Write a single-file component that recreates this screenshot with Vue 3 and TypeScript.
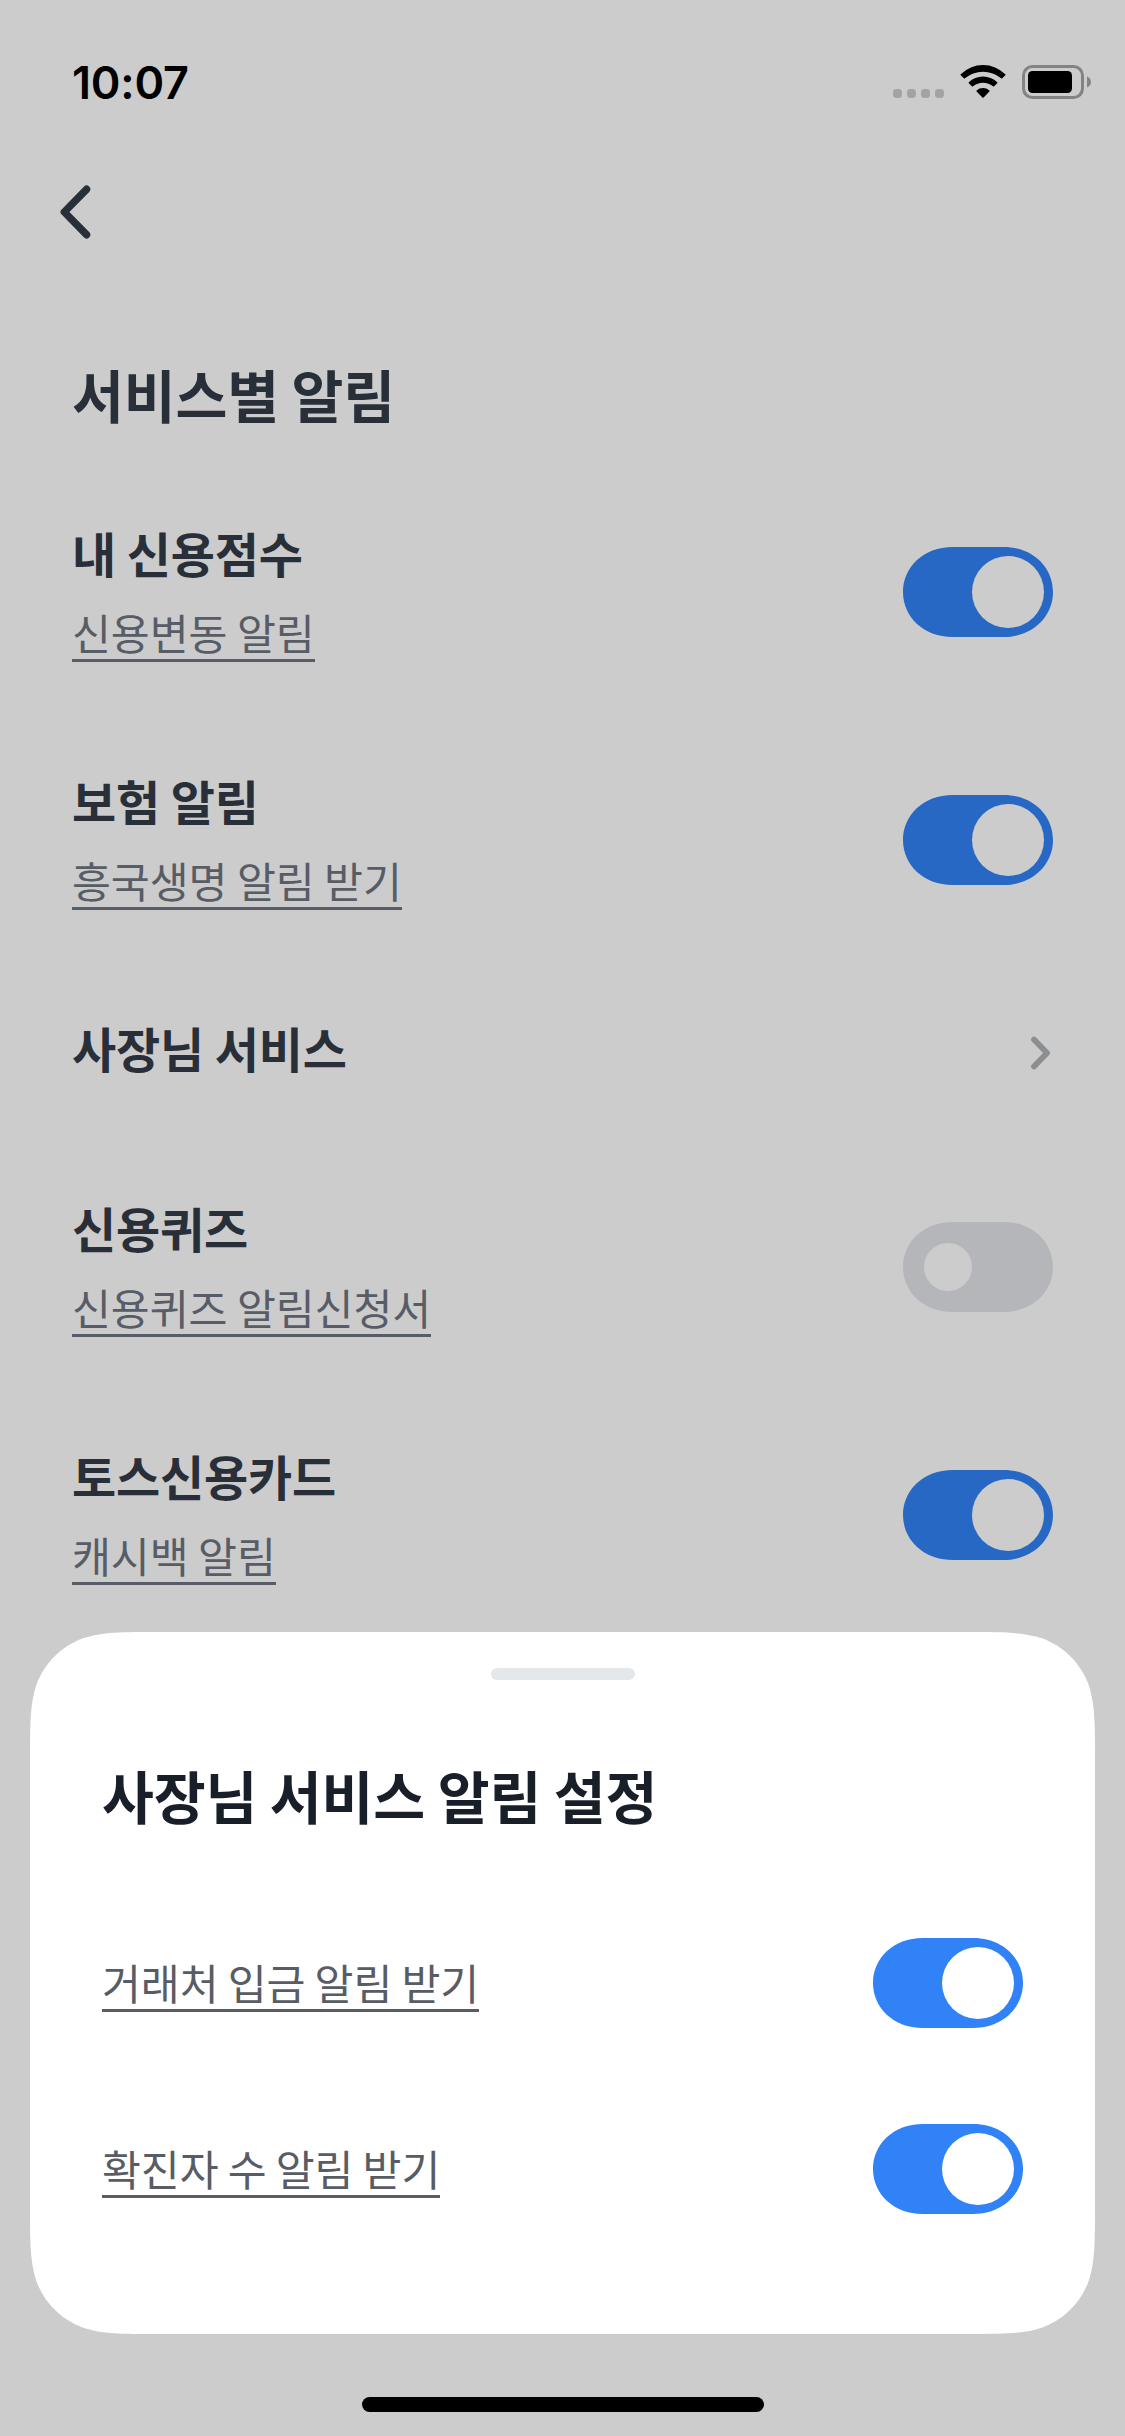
<script setup lang="ts">
interface ServiceRow {
  title: string
  detail?: string
  kind: 'switch' | 'link'
  on?: boolean
}

const services: ServiceRow[] = [
  { title: '내 신용점수', detail: '신용변동 알림', kind: 'switch', on: true },
  { title: '보험 알림', detail: '흥국생명 알림 받기', kind: 'switch', on: true },
  { title: '사장님 서비스', kind: 'link' },
  { title: '신용퀴즈', detail: '신용퀴즈 알림신청서', kind: 'switch', on: false },
  { title: '토스신용카드', detail: '캐시백 알림', kind: 'switch', on: true },
]

const sheetOptions: { label: string; on: boolean }[] = [
  { label: '거래처 입금 알림 받기', on: true },
  { label: '확진자 수 알림 받기', on: true },
]

// Continuous-curvature rounded rectangle used by the bottom sheet.
function smoothRect(w: number, h: number, r: number): string {
  const a = 1.52866 * r
  const b = 1.08849 * r
  const c = 0.86841 * r
  const d = 0.63149 * r
  const e = 0.07491 * r
  const f = 0.37282 * r
  const g = 0.16906 * r
  return [
    `M${a} 0 L${w - a} 0`,
    `C${w - b} 0 ${w - c} 0 ${w - d} ${e} C${w - f} ${g} ${w - g} ${f} ${w - e} ${d} C${w} ${c} ${w} ${b} ${w} ${a}`,
    `L${w} ${h - a}`,
    `C${w} ${h - b} ${w} ${h - c} ${w - e} ${h - d} C${w - g} ${h - f} ${w - f} ${h - g} ${w - d} ${h - e} C${w - c} ${h} ${w - b} ${h} ${w - a} ${h}`,
    `L${a} ${h}`,
    `C${b} ${h} ${c} ${h} ${d} ${h - e} C${f} ${h - g} ${g} ${h - f} ${e} ${h - d} C0 ${h - c} 0 ${h - b} 0 ${h - a}`,
    `L0 ${a}`,
    `C0 ${b} 0 ${c} ${e} ${d} C${g} ${f} ${f} ${g} ${d} ${e} C${c} 0 ${b} 0 ${a} 0 Z`,
  ].join(' ')
}

const sheetClip = `path('${smoothRect(1065, 702, 84)}')`
</script>

<template>
  <div class="screen">
    <header class="status">
      <span class="time">10:07</span>
      <div class="indicators">
        <svg class="dots" width="51" height="9" viewBox="0 0 51 9">
          <rect v-for="i in 4" :key="i" :x="(i - 1) * 14" y="0" width="9" height="9" rx="3.4" />
        </svg>
        <svg class="wifi" width="46" height="34" viewBox="0 0 46 34">
          <path d="M.7 9.3A31.4 31.4 0 0 1 45.3 9.3Q45.8 9.8 45.3 10.3L42.2 13.3Q41.7 13.8 41.1 13.3A28.4 28.4 0 0 0 4.9 13.3Q4.3 13.8 3.8 13.3L.7 10.3Q.2 9.8 .7 9.3Z" />
          <path d="M8.8 17.3A20 20 0 0 1 37.2 17.3Q37.7 17.8 37.2 18.3L34.1 21.3Q33.6 21.8 33 21.3A16 16 0 0 0 13 21.3Q12.4 21.8 11.9 21.3L8.8 18.3Q8.3 17.8 8.8 17.3Z" />
          <path d="M16.6 25.6A9.5 9.5 0 0 1 29.4 25.6Q29.9 26.1 29.4 26.6L23.6 32.6Q23 33.1 22.4 32.6L16.6 26.6Q16.1 26.1 16.6 25.6Z" />
        </svg>
        <svg class="battery" width="70" height="34" viewBox="0 0 70 34">
          <rect x="1.5" y="1.5" width="59" height="31" rx="9" fill="none" stroke="#828384" stroke-width="3" />
          <rect x="6" y="6" width="44" height="22" rx="4.5" />
          <path d="M65 11.5C70.300 13.500 70.300 20.500 65 22.500Z" fill="#828384" />
        </svg>
      </div>
    </header>

    <nav class="nav">
      <svg width="32" height="54" viewBox="0 0 32 54">
        <path d="M26.500 4.300L4.300 27L26.500 49.700" />
      </svg>
    </nav>

    <h1 class="heading">서비스별 알림</h1>

    <ul class="services">
      <li v-for="row in services" :key="row.title" class="row" :class="{ link: row.kind === 'link' }">
        <div class="copy">
          <strong>{{ row.title }}</strong>
          <span v-if="row.detail" class="detail">{{ row.detail }}</span>
        </div>
        <div v-if="row.kind === 'switch'" class="toggle" :class="{ on: row.on }"><i /></div>
        <svg v-else class="chevron" width="22" height="36" viewBox="0 0 22 36">
          <path d="M4 4.500L17 18L4 31.500" />
        </svg>
      </li>
    </ul>

    <div class="dim" />

    <section class="sheet" :style="{ clipPath: sheetClip }">
      <div class="handle" />
      <h2>사장님 서비스 알림 설정</h2>
      <div v-for="option in sheetOptions" :key="option.label" class="option">
        <span class="detail">{{ option.label }}</span>
        <div class="toggle" :class="{ on: option.on }"><i /></div>
      </div>
    </section>

    <div class="home" />
  </div>
</template>

<style>
body {
  margin: 0;
  background: #fff;
}
</style>

<style scoped>
.screen {
  position: relative;
  width: 1125px;
  height: 2436px;
  overflow: hidden;
  background: #fff;
  font-family: 'Noto Sans CJK KR', sans-serif;
}
.status {
  position: relative;
  z-index: 2;
  display: flex;
  justify-content: space-between;
  box-sizing: border-box;
  height: 132px;
  padding: 55px 33px 0 72px;
}
.time {
  padding-top: 1px;
  font: 600 45px/54px Inter, sans-serif;
  letter-spacing: -0.2px;
  color: #000;
}
.indicators {
  display: flex;
  align-items: flex-start;
  padding-top: 10px;
}
.dots {
  margin: 24px 16px 0 0;
  fill: #a2a3a3;
}
.wifi {
  margin-right: 16px;
}
.nav {
  display: flex;
  align-items: center;
  height: 160px;
  padding-left: 60px;
}
.nav path {
  fill: none;
  stroke: #333b48;
  stroke-width: 7.5;
  stroke-linecap: round;
  stroke-linejoin: round;
}
.heading,
h2 {
  margin: 0;
  font-size: 56.4px;
  font-weight: 700;
  line-height: 80px;
  letter-spacing: -0.15px;
  white-space: nowrap;
}
.heading {
  box-sizing: border-box;
  height: 176px;
  padding: 62px 72px 0;
  color: #333b48;
}
.services {
  margin: 0;
  padding: 0;
  list-style: none;
}
.row {
  display: flex;
  align-items: center;
  justify-content: space-between;
  height: 248px;
  padding: 0 72px;
}
.row.link {
  height: 179px;
}
.copy {
  display: flex;
  flex-direction: column;
  align-items: flex-start;
  gap: 17px;
  padding-bottom: 6px;
}
.link .copy {
  padding-bottom: 13px;
}
strong {
  font-size: 48px;
  font-weight: 700;
  line-height: 72px;
  letter-spacing: -0.15px;
  color: #333b48;
}
.detail {
  height: 54px;
  font-size: 42.3px;
  line-height: 54px;
  letter-spacing: -0.05px;
  color: #6d7480;
  border-bottom: 3px solid #6d7480;
  white-space: nowrap;
}
.toggle {
  display: flex;
  align-items: center;
  box-sizing: border-box;
  width: 150px;
  height: 90px;
  padding: 0 21px;
  background: #e1e4e8;
  clip-path: path('M0 45C0 20.5 20 0 50 0C66 -0.200 84 -0.200 100 0C130 0 150 20.5 150 45C150 69.500 130 90 100 90C84 90.200 66 90.200 50 90C20 90 0 69.500 0 45Z');
}
.toggle i {
  width: 48px;
  height: 48px;
  border-radius: 50%;
  background: #fff;
}
.toggle.on {
  justify-content: flex-end;
  padding: 0 9px;
  background: #3182f6;
}
.toggle.on i {
  width: 72px;
  height: 72px;
}
.chevron {
  margin: 0 1px 1px 0;
}
.chevron path {
  fill: none;
  stroke: #aeb3b7;
  stroke-width: 5.8;
  stroke-linecap: round;
  stroke-linejoin: round;
}
.dim {
  position: absolute;
  inset: 0;
  background: rgba(0, 0, 0, 0.2);
}
.sheet {
  position: absolute;
  left: 30px;
  bottom: 102px;
  box-sizing: border-box;
  width: 1065px;
  height: 702px;
  padding: 36px 72px 0;
  background: #fff;
}
.handle {
  width: 144px;
  height: 12px;
  margin: 0 auto;
  border-radius: 6px;
  background: #e5e8eb;
}
h2 {
  margin: 75px 0 55px;
  color: #191f28;
}
.option {
  display: flex;
  align-items: center;
  justify-content: space-between;
  height: 186px;
}
.option .detail {
  color: #585c64;
  border-color: #585c64;
  word-spacing: -0.3px;
}
.home {
  position: absolute;
  left: 362px;
  bottom: 24px;
  width: 402px;
  height: 15px;
  border-radius: 8px;
  background: #000;
}
</style>
